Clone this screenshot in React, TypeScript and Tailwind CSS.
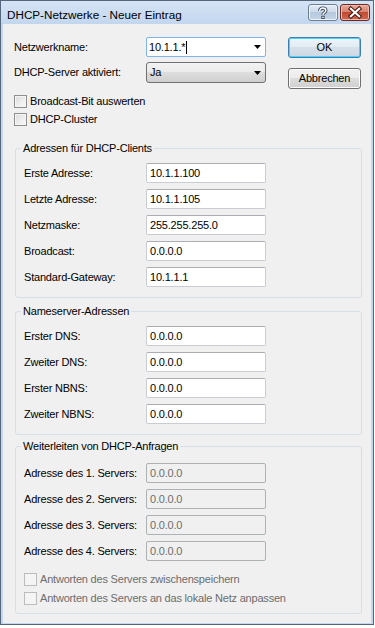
import type { ReactNode } from "react";

const font = "font-['Liberation_Sans',Arial,sans-serif]";
const uiText = "text-[11px] tracking-[-0.2px] text-black";

function Arrow() {
	return (
		<svg width="7" height="4" viewBox="0 0 7 4" className="shrink-0">
			<polygon points="0,0 7,0 3.5,4" fill="#000" />
		</svg>
	);
}

function CheckBox({ label, disabled }: { label: string; disabled?: boolean }) {
	return (
		<div className="flex h-[13px] items-center">
			<span
				className={
					disabled
						? "h-[13px] w-[13px] shrink-0 border border-[#bcbcbc] bg-[#f4f4f4]"
						: "h-[13px] w-[13px] shrink-0 border border-[#8e8f8f] bg-[linear-gradient(135deg,#dcdcdc,#fbfbfb)] shadow-[inset_0_0_0_1px_#f4f4f4]"
				}
			/>
			<span
				className={`ml-[3px] whitespace-nowrap text-[11px] tracking-[-0.2px] ${disabled ? "text-[#6d6d6d]" : "text-black"}`}
			>
				{label}
			</span>
		</div>
	);
}

function Field({
	label,
	value,
	disabled,
}: {
	label: string;
	value: string;
	disabled?: boolean;
}) {
	return (
		<div className="flex h-[20px] items-center pl-[8px]">
			<span className={`w-[122px] shrink-0 whitespace-nowrap ${uiText}`}>
				{label}
			</span>
			<div
				className={
					disabled
						? "flex h-[20px] w-[120px] items-center rounded-[2px] border border-[#adb2b5] bg-[#f0f0f0] px-[3px] text-[11px] tracking-[-0.2px] text-[#6d6d6d]"
						: "flex h-[20px] w-[120px] items-center rounded-[2px] border border-[#c9ccd2] border-t-[#abadb3] bg-white px-[3px] text-[11px] tracking-[-0.2px] text-black"
				}
			>
				{value}
			</div>
		</div>
	);
}

function Group({
	title,
	className,
	children,
}: {
	title: string;
	className: string;
	children: ReactNode;
}) {
	return (
		<fieldset
			className={`ml-[12px] w-[347px] rounded-[3px] border border-[#d5dfe5] ${className}`}
		>
			<legend
				className={`ml-[5px] px-[2px] leading-[12px] whitespace-nowrap ${uiText}`}
			>
				{title}
			</legend>
			{children}
		</fieldset>
	);
}

function TitleButtons() {
	return (
		<div className="flex gap-[2px] pt-[3px]">
			<div className="flex h-[17px] w-[30px] items-start justify-center rounded-[3px] border border-[#6d7f97] bg-[linear-gradient(#e3ebf5,#ccd9e9_50%,#b6c8de_50%,#c6d5e7)] shadow-[inset_0_0_0_1px_#eef3f9]">
				<svg width="30" height="15" viewBox="0 0 30 15">
					<path
						d="M11.5 6 C11.5 3.6 13 2.8 14.8 2.8 C16.8 2.8 18 3.9 18 5.5 C18 7.6 15 8 15 10"
						fill="none"
						stroke="#3a4a5e"
						strokeWidth="3.6"
					/>
					<rect x="13.2" y="11" width="3.6" height="3.4" fill="#3a4a5e" />
					<path
						d="M11.5 6 C11.5 3.6 13 2.8 14.8 2.8 C16.8 2.8 18 3.9 18 5.5 C18 7.6 15 8 15 10"
						fill="none"
						stroke="#fff"
						strokeWidth="1.6"
					/>
					<rect x="14.2" y="12" width="1.6" height="1.4" fill="#fff" />
				</svg>
			</div>
			<div className="flex h-[17px] w-[30px] items-start justify-center rounded-[3px] border border-[#6b2a24] bg-[linear-gradient(#e8a898,#d7806c_50%,#c24a33_50%,#cf6a4e)] shadow-[inset_0_0_0_1px_#efb9ab]">
				<svg width="30" height="15" viewBox="0 0 30 15">
					<path
						d="M10.5 3.5 L19.5 11.5 M19.5 3.5 L10.5 11.5"
						stroke="#4a1a12"
						strokeWidth="4.4"
						strokeLinecap="square"
					/>
					<path
						d="M10.5 3.5 L19.5 11.5 M19.5 3.5 L10.5 11.5"
						stroke="#fff"
						strokeWidth="2.2"
						strokeLinecap="square"
					/>
				</svg>
			</div>
		</div>
	);
}

export default function App() {
	return (
		<div className={`h-[628px] w-[375px] bg-white ${font}`}>
			<div className="flex h-[625px] w-[374px] flex-col border border-[#55667c] bg-[#c4d7ee]">
				<header className="flex h-[23px] shrink-0 justify-between bg-[linear-gradient(#d6e4f5,#c2d6ee)] pr-[3px] pl-[6px]">
					<span className="pt-[7px] text-[11.7px] leading-[14px] whitespace-nowrap text-black">
						DHCP-Netzwerke - Neuer Eintrag
					</span>
					<TitleButtons />
				</header>

				<main className="mx-[2px] mb-[1px] flex-1 bg-[#f0f0f0] pt-[13px]">
					<section className="flex">
						<div className="pl-[11px]">
							<div className="flex h-[20px] items-center">
								<span className={`w-[132px] ${uiText}`}>Netzwerkname:</span>
								<div className="flex h-[20px] w-[120px] items-center justify-between rounded-[2px] border border-[#7eb4ea] bg-white pr-[4px] pl-[2px]">
									<span className="flex items-center text-[11px] tracking-[-0.2px] text-black">
										10.1.1.*
										<span className="ml-[1px] h-[13px] w-px bg-black" />
									</span>
									<Arrow />
								</div>
							</div>
							<div className="mt-[5px] flex h-[21px] items-center">
								<span className={`w-[132px] ${uiText}`}>
									DHCP-Server aktiviert:
								</span>
								<div className="flex h-[21px] w-[120px] items-center justify-between rounded-[3px] border border-[#707070] bg-[linear-gradient(#f2f2f2,#ebebeb_50%,#dddddd_50%,#cfcfcf)] pr-[4px] pl-[3px]">
									<span className={uiText}>Ja</span>
									<Arrow />
								</div>
							</div>
						</div>
						<div className="ml-[22px] flex flex-col">
							<button className="flex h-[21px] w-[73px] items-center justify-center rounded-[3px] border border-[#3c7fb1] bg-[linear-gradient(#edf4fa,#e3ebf3_50%,#d6e0ea_50%,#ccd8e4)] shadow-[inset_0_0_0_1px_#48d4f7] text-[11px] text-black">
								OK
							</button>
							<button className="mt-[10px] flex h-[21px] w-[73px] items-center justify-center rounded-[3px] border border-[#707070] bg-[linear-gradient(#f2f2f2,#ebebeb_50%,#dddddd_50%,#cfcfcf)] shadow-[inset_0_0_0_1px_#fbfbfb] text-[11px] tracking-[-0.2px] text-black">
								Abbrechen
							</button>
						</div>
					</section>

					<div className="mt-[6px] flex flex-col gap-[5px] pl-[11px]">
						<CheckBox label="Broadcast-Bit auswerten" />
						<CheckBox label="DHCP-Cluster" />
					</div>

					<Group
						title="Adressen für DHCP-Clients"
						className="mt-[16px] pt-[9px] pb-[10px]"
					>
						<div className="flex flex-col gap-[6px]">
							<Field label="Erste Adresse:" value="10.1.1.100" />
							<Field label="Letzte Adresse:" value="10.1.1.105" />
							<Field label="Netzmaske:" value="255.255.255.0" />
							<Field label="Broadcast:" value="0.0.0.0" />
							<Field label="Standard-Gateway:" value="10.1.1.1" />
						</div>
					</Group>

					<Group
						title="Nameserver-Adressen"
						className="mt-[7px] pt-[9px] pb-[10px]"
					>
						<div className="flex flex-col gap-[6px]">
							<Field label="Erster DNS:" value="0.0.0.0" />
							<Field label="Zweiter DNS:" value="0.0.0.0" />
							<Field label="Erster NBNS:" value="0.0.0.0" />
							<Field label="Zweiter NBNS:" value="0.0.0.0" />
						</div>
					</Group>

					<Group
						title="Weiterleiten von DHCP-Anfragen"
						className="mt-[5px] pt-[11px] pb-[8px]"
					>
						<div className="flex flex-col gap-[6px]">
							<Field label="Adresse des 1. Servers:" value="0.0.0.0" disabled />
							<Field label="Adresse des 2. Servers:" value="0.0.0.0" disabled />
							<Field label="Adresse des 3. Servers:" value="0.0.0.0" disabled />
							<Field label="Adresse des 4. Servers:" value="0.0.0.0" disabled />
						</div>
						<div className="mt-[12px] flex flex-col gap-[6px] pl-[8px]">
							<CheckBox
								label="Antworten des Servers zwischenspeichern"
								disabled
							/>
							<CheckBox
								label="Antworten des Servers an das lokale Netz anpassen"
								disabled
							/>
						</div>
					</Group>
				</main>
			</div>
		</div>
	);
}
